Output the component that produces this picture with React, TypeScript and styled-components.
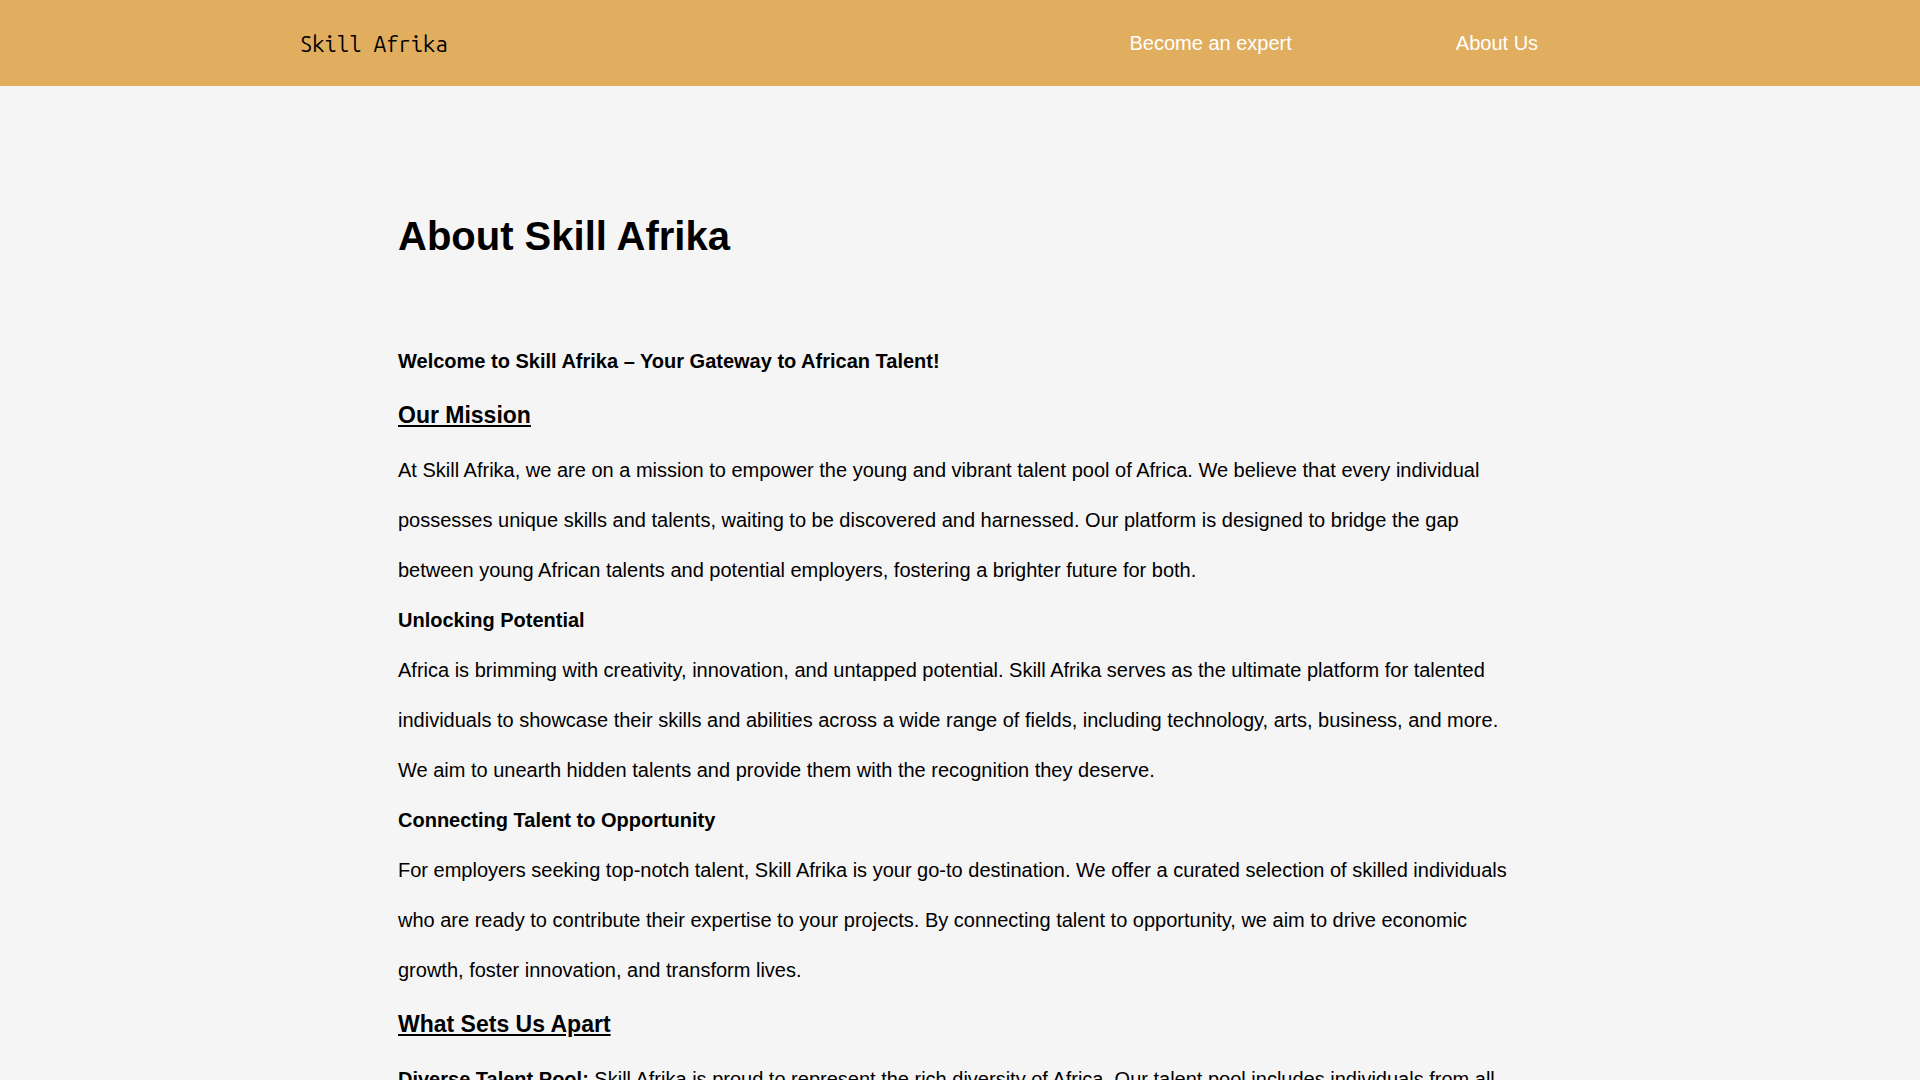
import React from "react";
import styled, { createGlobalStyle } from "styled-components";

const GlobalStyle = createGlobalStyle`
  * { box-sizing: border-box; margin: 0; padding: 0; }
  body { background: #f5f5f5; color: #000; font-family: "Liberation Sans", Arial, sans-serif; }
`;
const Header = styled.header`
  display: flex;
  justify-content: space-around;
  align-items: center;
  height: 86px;
  background: #e0ae5e;
`;
const Logo = styled.a`
  font-family: "Ubuntu Mono", "Ubuntu Sans Mono", "DejaVu Sans Mono", monospace;
  font-size: 22px;
  color: #000;
  text-decoration: none;
`;
const Nav = styled.nav`
  display: flex;
`;
const NavLink = styled.a`
  margin: 0 82px;
  font-size: 20px;
  color: #fff;
  text-decoration: none;
`;
const Main = styled.main`
  width: 60%;
  margin: 0 auto;
  padding: 100px 14px;
  font-size: 20px;
  line-height: 50px;
`;
const Title = styled.h1`
  font-size: 40px;
  line-height: 100px;
  margin-bottom: 50px;
`;
const Section = styled.h2`
  font-size: 23px;
  line-height: 59px;
  text-decoration: underline;
`;
const Sub = styled.h3`
  font-size: 20px;
`;

export default function App() {
  return (
    <>
      <GlobalStyle />
      <Header>
        <Logo href="#">Skill Afrika</Logo>
        <Nav>
          <NavLink href="#expert">Become an expert</NavLink>
          <NavLink href="#about">About Us</NavLink>
        </Nav>
      </Header>
      <Main>
        <Title>About Skill Afrika</Title>
        <Sub>Welcome to Skill Afrika – Your Gateway to African Talent!</Sub>
        <Section>Our Mission</Section>
        <p>At Skill Afrika, we are on a mission to empower the young and vibrant talent pool of Africa. We believe that every individual possesses unique skills and talents, waiting to be discovered and harnessed. Our platform is designed to bridge the gap between young African talents and potential employers, fostering a brighter future for both.</p>
        <Sub>Unlocking Potential</Sub>
        <p>Africa is brimming with creativity, innovation, and untapped potential. Skill Afrika serves as the ultimate platform for talented individuals to showcase their skills and abilities across a wide range of fields, including technology, arts, business, and more. We aim to unearth hidden talents and provide them with the recognition they deserve.</p>
        <Sub>Connecting Talent to Opportunity</Sub>
        <p>For employers seeking top-notch talent, Skill Afrika is your go-to destination. We offer a curated selection of skilled individuals who are ready to contribute their expertise to your projects. By connecting talent to opportunity, we aim to drive economic growth, foster innovation, and transform lives.</p>
        <Section>What Sets Us Apart</Section>
        <p><strong>Diverse Talent Pool:</strong> Skill Afrika is proud to represent the rich diversity of Africa. Our talent pool includes individuals from all</p>
      </Main>
    </>
  );
}
